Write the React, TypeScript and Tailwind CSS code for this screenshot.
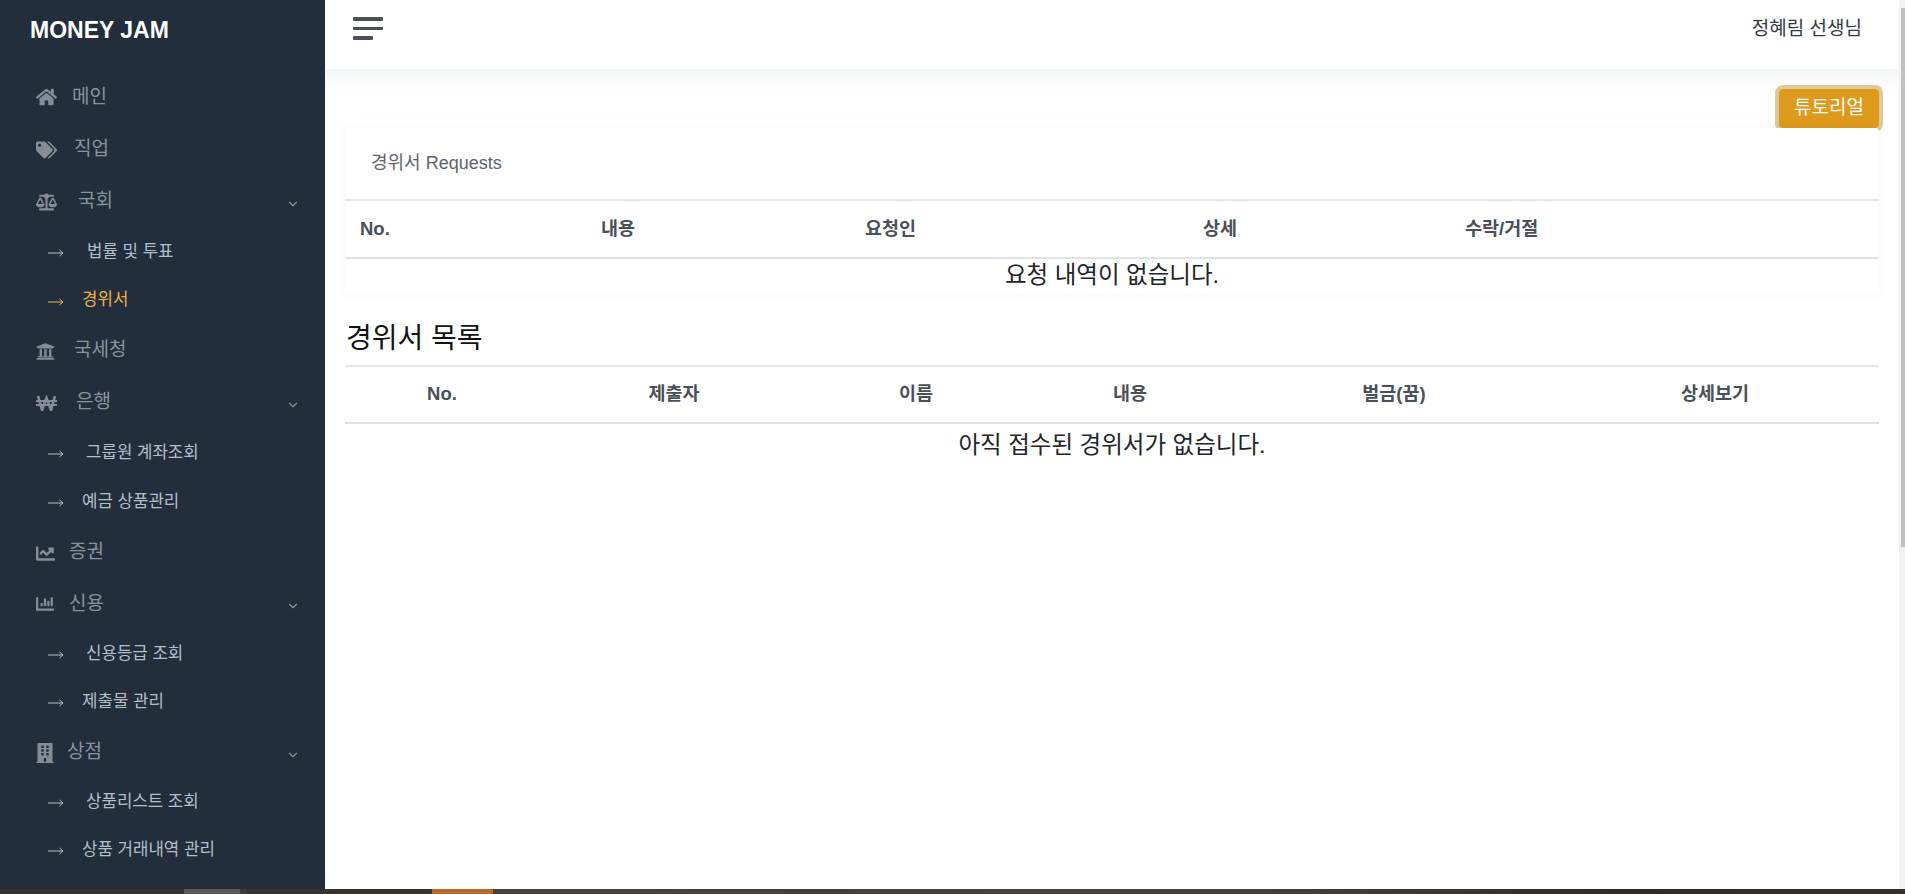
import React from "react";
import { FaHome, FaTags, FaBalanceScale, FaUniversity, FaChartLine, FaChartBar, FaBuilding } from "react-icons/fa";
import { FiChevronDown } from "react-icons/fi";

const ko = "font-['Liberation_Sans','Noto_Sans_CJK_KR',sans-serif]";

function Arrow({ active }: { active?: boolean }) {
  return (
    <svg width="16" height="10" viewBox="0 0 16 10" className={active ? "text-[#f5b041]" : "text-[#b4bfca]"} fill="none" stroke="currentColor" strokeWidth="1">
      <path d="M0 5H15M11.5 2L15 5L11.5 8" />
    </svg>
  );
}

function WonIcon() {
  return (
    <svg width="21" height="16" viewBox="0 0 21 16" fill="none" stroke="currentColor">
      <path d="M2 1L6 15L10.5 3L15 15L19 1" strokeWidth="2.6" />
      <path d="M0 6H21M0 10H21" strokeWidth="1.8" />
    </svg>
  );
}

function Main({ icon, label, gap, chevron, h, up }: { icon: React.ReactNode; label: string; gap: number; chevron?: boolean; h: string; up?: boolean }) {
  return (
    <div className={`flex items-center pl-9 pr-[25px] text-[#8a929c] ${h}`}>
      <span className="flex w-[21px] shrink-0 justify-start text-[#858c96]">{icon}</span>
      <span className={`text-[19px] leading-none ${up ? "-mt-[4px]" : "-mt-[2px]"}`} style={{ marginLeft: gap }}>{label}</span>
      {chevron && <FiChevronDown className="ml-auto mt-[4px] text-[14px] text-[#8a929c]" />}
    </div>
  );
}

function Sub({ label, gap, active, h, down }: { label: string; gap: number; active?: boolean; h: string; down?: boolean }) {
  return (
    <div className={`flex items-center pl-[48px] text-[16.8px] leading-none ${active ? "text-[#f5b041]" : "text-[#b4bfca]"} ${h}`}>
      <Arrow active={active} />
      <span className={down ? "mt-0" : "-mt-[2px]"} style={{ marginLeft: gap }}>{label}</span>
    </div>
  );
}

function Sidebar() {
  return (
    <aside className="w-[325px] shrink-0 bg-[#222e3c] pt-[15px]">
      <div className="pl-[30px] text-[23px] font-bold leading-[30px] text-white">MONEY JAM</div>
      <nav className="mt-[26px]">
        <Main icon={<FaHome className="text-[22px]" />} label="메인" gap={15} h="h-[52.5px]" />
        <Main icon={<FaTags className="text-[22px]" />} label="직업" gap={17} h="h-[52.5px]" />
        <Main icon={<FaBalanceScale className="text-[22px]" />} label="국회" gap={21} chevron up h="h-[52px]" />
        <Sub label="법률 및 투표" gap={23} down h="h-[49.5px]" />
        <Sub label="경위서" gap={18} active h="h-[48.5px]" />
        <Main icon={<FaUniversity className="text-[19px]" />} label="국세청" gap={17} up h="h-[50.5px]" />
        <Main icon={<WonIcon />} label="은행" gap={19} chevron h="h-[52px]" />
        <Sub label="그룹원 계좌조회" gap={22} down h="h-[50.5px]" />
        <Sub label="예금 상품관리" gap={18} h="h-[48.5px]" />
        <Main icon={<FaChartLine className="text-[19px]" />} label="증권" gap={12} up h="h-[51px]" />
        <Main icon={<FaChartBar className="text-[18px]" />} label="신용" gap={12} chevron h="h-[51.5px]" />
        <Sub label="신용등급 조회" gap={22} down h="h-[49px]" />
        <Sub label="제출물 관리" gap={18} h="h-[48.5px]" />
        <Main icon={<FaBuilding className="-ml-[1px] text-[20px]" />} label="상점" gap={10} chevron h="h-[50.5px]" />
        <Sub label="상품리스트 조회" gap={22} down h="h-[49.5px]" />
        <Sub label="상품 거래내역 관리" gap={18} h="h-[47.5px]" />
      </nav>
    </aside>
  );
}

function Header() {
  return (
    <header className="flex h-[69px] shrink-0 items-start justify-between bg-white pl-[28px] pr-[37px]">
      <div className="mt-[17px] flex w-[30px] flex-col gap-[6px]">
        <span className="h-[4px] w-full rounded-[1px] bg-[#495057]" />
        <span className="h-[3px] w-full rounded-[1px] bg-[#495057]" />
        <span className="h-[4px] w-[20px] rounded-[1px] bg-[#495057]" />
      </div>
      <div className="mt-[17px] text-[19px] leading-[24px] text-[#343a40]">정혜림 선생님</div>
    </header>
  );
}

function RequestsCard() {
  return (
    <section className="relative mx-[20px] rounded-[4px] bg-white shadow-[0_0_16px_rgba(0,0,0,0.04)]">
      <div className="flex h-[73px] items-center border-b-2 border-[#e2e5e9] pl-[26px] text-[18px] text-[#5b6570]">경위서 Requests</div>
      <table className="w-full table-fixed border-collapse">
        <colgroup>
          <col className="w-[241px]" />
          <col className="w-[264px]" />
          <col className="w-[338px]" />
          <col className="w-[262px]" />
          <col />
        </colgroup>
        <thead>
          <tr className="h-[57px] border-b-2 border-[#dee2e6] text-left text-[18.5px] font-bold text-[#4a5058]">
            <th className="pl-[15px]">No.</th>
            <th className="pl-[15px]">내용</th>
            <th className="pl-[15px]">요청인</th>
            <th className="pl-[15px]">상세</th>
            <th className="pl-[15px]">수락/거절</th>
          </tr>
        </thead>
        <tbody>
          <tr>
            <td colSpan={5} className="h-[36px] pb-[2px] text-center text-[23.5px] leading-none text-[#212529]">요청 내역이 없습니다.</td>
          </tr>
        </tbody>
      </table>
    </section>
  );
}

function ListSection() {
  const cols = ["No.", "제출자", "이름", "내용", "벌금(꿈)", "상세보기"];
  const widths = ["w-[194px]", "w-[270px]", "w-[214px]", "w-[214px]", "w-[314px]", ""];
  return (
    <section className="mx-[20px] mt-[26px]">
      <h3 className="pl-[1px] text-[28px] font-normal leading-[38px] text-[#111]">경위서 목록</h3>
      <table className="mt-[7px] w-full table-fixed border-collapse">
        <colgroup>
          {widths.map((w, i) => <col key={i} className={w} />)}
        </colgroup>
        <thead>
          <tr className="h-[57px] border-y-2 border-t-[#e4e6e9] border-b-[#dee2e6] text-center text-[18.5px] font-bold text-[#4a5058]">
            {cols.map((c) => <th key={c} className="pb-[1px]">{c}</th>)}
          </tr>
        </thead>
        <tbody>
          <tr>
            <td colSpan={6} className="h-[44px] text-center text-[23.5px] leading-none text-[#212529]">아직 접수된 경위서가 없습니다.</td>
          </tr>
        </tbody>
      </table>
    </section>
  );
}

export default function App() {
  return (
    <div className={`flex h-[894px] w-full flex-col overflow-hidden bg-white ${ko}`}>
      <div className="flex min-h-0 flex-1">
        <Sidebar />
        <main className="flex min-w-0 flex-1 flex-col">
          <Header />
          <div className="h-[20px] shrink-0 bg-gradient-to-b from-[#f4f6f6] to-[#fdfdfd]" />
          <div className="flex shrink-0 justify-end pr-[20px]">
            <button className="flex h-[39px] w-[100px] items-center justify-center rounded-[4px] border border-[#d99a20] bg-[#de9a1c] pb-[1px] text-[19px] text-white shadow-[0_0_0_4px_#e0c999]">튜토리얼</button>
          </div>
          <RequestsCard />
          <ListSection />
        </main>
        <div className="w-[6px] shrink-0 bg-[#f1f1f1] pl-[2px]">
          <div className="mt-[8px] h-[539px] bg-[#c1c1c1]" />
        </div>
      </div>
      <div className="flex h-[5px] shrink-0">
        <div className="w-[184px] bg-[#3a342c]" />
        <div className="w-[56px] bg-[#5d5a52]" />
        <div className="w-[6px] bg-[#3f3c36]" />
        <div className="w-[186px] bg-[#37322a]" />
        <div className="w-[61px] bg-[#b5692a]" />
        <div className="flex-1 bg-[linear-gradient(to_right,#47423b_0%,#44403a_55%,#2f2c26_80%,#35322b_100%)]" />
      </div>
    </div>
  );
}
